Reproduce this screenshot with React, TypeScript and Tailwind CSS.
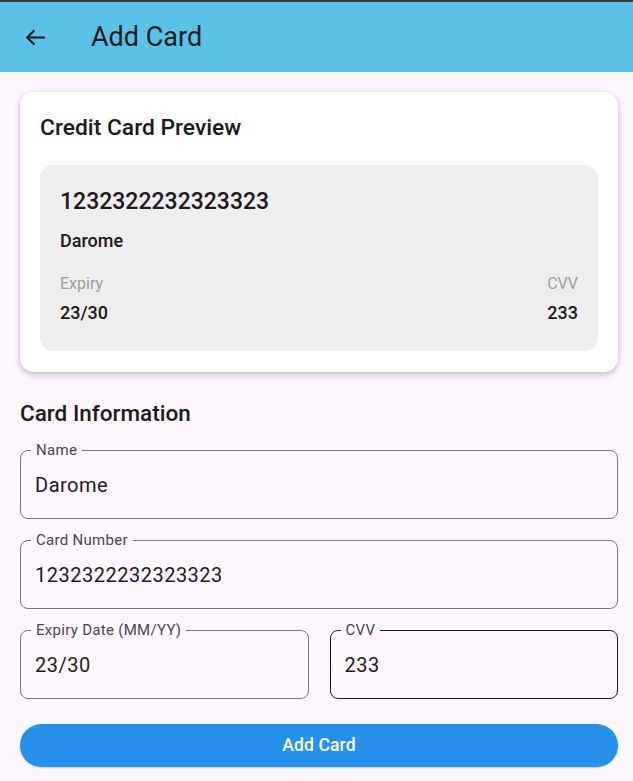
import React from "react";

const MED = "font-['Roboto_Medium',Roboto,sans-serif] font-medium";

function Field({ label, value, className = "", dark = false }: { label: string; value: string; className?: string; dark?: boolean }) {
  return (
    <div className={`relative h-[69px] rounded-[8px] border ${dark ? "border-[#1f1d22]" : "border-[#7a7680]"} ${className}`}>
      <span className="absolute left-[10px] top-[-11px] bg-[#fdf7fe] px-[5px] text-[15px] leading-[20px] tracking-[0.3px] text-[#48454e]">
        {label}
      </span>
      <div className="flex h-full items-center pl-[14px] text-[20px] tracking-[0.5px] text-[#1d1b20]">{value}</div>
    </div>
  );
}

export default function App() {
  return (
    <div className="h-[781px] w-full overflow-hidden bg-[#fdf7fe]" style={{ fontFamily: "Roboto, 'Noto Sans', sans-serif" }}>
      <div className="h-[2px] bg-[#3b3b3b]" />
      <div className="flex h-[70px] items-center bg-[#5ac2e7] text-[#1d1b20]">
        <div className="flex w-[91px] items-center pl-[23px]">
          <svg width="25" height="25" viewBox="0 0 24 24" fill="none" stroke="#1d1b20" strokeWidth="2" strokeLinecap="square">
            <path d="M20 12H5" />
            <path d="M11 5l-7 7 7 7" strokeLinejoin="miter" strokeLinecap="butt" />
          </svg>
        </div>
        <div className="text-[27px] leading-[32px]">Add Card</div>
      </div>

      <div className="pl-[20px] pr-[15px] pt-[20px]">
        <div className="rounded-[14px] bg-white px-[20px] pb-[21px] pt-[22px] shadow-[0_2px_6px_rgba(0,0,0,0.28)]">
          <div className={`text-[22.8px] leading-[28px] text-[#1d1b20] ${MED}`}>Credit Card Preview</div>
          <div className="mt-[23px] h-[186px] rounded-[14px] bg-[#eeeeee] px-[20px] pt-[22px]">
            <div className={`text-[23px] leading-[30px] text-[#1d1b20] ${MED}`}>1232322232323323</div>
            <div className={`mt-[12px] text-[18px] leading-[24px] text-[#1d1b20] ${MED}`}>Darome</div>
            <div className="mt-[21px] flex justify-between">
              <div>
                <div className="text-[16px] leading-[20px] text-[#9e9e9e]">Expiry</div>
                <div className={`mt-[8px] text-[18px] leading-[22px] text-[#1d1b20] ${MED}`}>23/30</div>
              </div>
              <div className="text-right">
                <div className="text-[16px] leading-[20px] text-[#9e9e9e]">CVV</div>
                <div className={`mt-[8px] text-[18px] leading-[22px] text-[#1d1b20] ${MED}`}>233</div>
              </div>
            </div>
          </div>
        </div>

        <div className={`mt-[27px] text-[22.5px] leading-[28px] text-[#1d1b20] ${MED}`}>Card Information</div>

        <Field label="Name" value="Darome" className="mt-[23px]" />
        <Field label="Card Number" value="1232322232323323" className="mt-[21px]" />
        <div className="mt-[21px] flex gap-[21px]">
          <Field label="Expiry Date (MM/YY)" value="23/30" className="flex-1" />
          <Field label="CVV" value="233" className="flex-1" dark />
        </div>

        <button className={`mt-[25px] flex h-[43px] w-full items-center justify-center rounded-full bg-[#2591ea] text-[17.5px] tracking-[0.1px] text-white shadow-[0_1px_2px_rgba(0,0,0,0.2)] ${MED}`}>
          Add Card
        </button>
      </div>
    </div>
  );
}
